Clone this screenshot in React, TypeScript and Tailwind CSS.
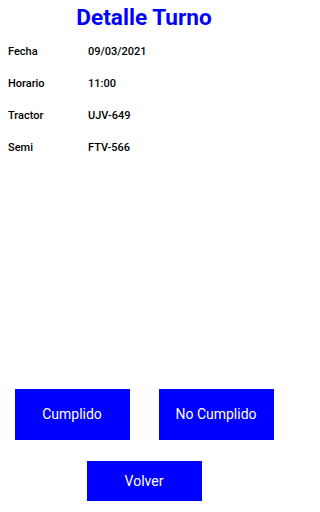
export default function App() {
    const rows = [
        { label: 'Fecha', value: '09/03/2021' },
        { label: 'Horario', value: '11:00' },
        { label: 'Tractor', value: 'UJV-649' },
        { label: 'Semi', value: 'FTV-566' },
    ];

    return (
        <div className="flex flex-col w-[288px] h-[512px] bg-white font-['Roboto',sans-serif]">
            {/* Title */}
            <h1 className="text-center text-[22.6px] leading-[26px] font-bold text-[#0000ff] pt-[5px]">
                Detalle Turno
            </h1>

            {/* Details */}
            <div className="flex flex-col gap-[16px] px-[8px] pt-[13px]">
                {rows.map((row) => (
                    <div key={row.label} className="flex text-[11px] leading-[16px] font-medium text-black">
                        <span className="w-[80px]">{row.label}</span>
                        <span>{row.value}</span>
                    </div>
                ))}
            </div>

            <div className="flex-1" />

            {/* Actions */}
            <div className="flex flex-col items-center gap-[21px] pb-[11px]">
                <div className="flex justify-center gap-[29px]">
                    <button className="w-[115px] h-[51px] bg-[#0000ff] text-white text-[14px]">
                        Cumplido
                    </button>
                    <button className="w-[115px] h-[51px] bg-[#0000ff] text-white text-[14px]">
                        No Cumplido
                    </button>
                </div>
                <button className="w-[115px] h-[40px] bg-[#0000ff] text-white text-[14px]">
                    Volver
                </button>
            </div>
        </div>
    );
}
